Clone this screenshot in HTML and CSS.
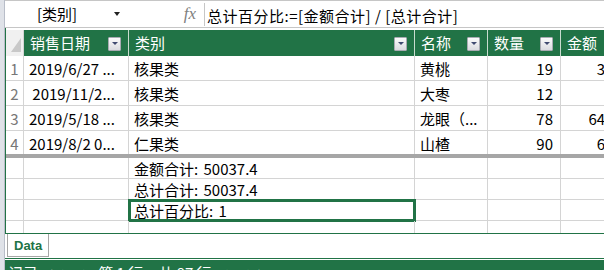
FILE: index.html
```html
<!DOCTYPE html>
<html lang="zh-CN">
<head>
<meta charset="UTF-8">
<title>Power Pivot - Data</title>
<link rel="stylesheet" href="styles.css">
</head>
<body>
  <div class="window">
    <div class="edge"></div>
    <div class="main">

      <div class="formula-bar">
        <div class="name-box">
          <span class="name">[类别]</span>
          <span class="name-arrow"></span>
        </div>
        <div class="fx">fx</div>
        <div class="formula">总计百分比:=[金额合计] / [总计合计]</div>
      </div>

      <div class="grid-panel">
        <div class="grid head">
          <div class="corner">
            <svg width="17" height="25" viewBox="0 0 17 25"><polygon points="15,8 15,22 5,22" fill="#c8c8c8"/></svg>
          </div>
          <div class="hcell"><span>销售日期</span><span class="filter"></span></div>
          <div class="hcell"><span>类别</span><span class="filter"></span></div>
          <div class="hcell"><span>名称</span><span class="filter"></span></div>
          <div class="hcell"><span>数量</span><span class="filter"></span></div>
          <div class="hcell"><span>金额</span></div>
        </div>

        <div class="rows">
          <div class="grid row">
            <div class="cell num-col">1</div>
            <div class="cell">2019/6/27 ...</div>
            <div class="cell">核果类</div>
            <div class="cell">黄桃</div>
            <div class="cell right">19</div>
            <div class="cell right">34.2</div>
          </div>
          <div class="grid row">
            <div class="cell num-col">2</div>
            <div class="cell">&nbsp;2019/11/2...</div>
            <div class="cell">核果类</div>
            <div class="cell">大枣</div>
            <div class="cell right">12</div>
            <div class="cell right">72</div>
          </div>
          <div class="grid row">
            <div class="cell num-col">3</div>
            <div class="cell">2019/5/18 ...</div>
            <div class="cell">核果类</div>
            <div class="cell">龙眼（...</div>
            <div class="cell right">78</div>
            <div class="cell right">646.8</div>
          </div>
          <div class="grid row">
            <div class="cell num-col">4</div>
            <div class="cell">2019/8/2 0...</div>
            <div class="cell">仁果类</div>
            <div class="cell">山楂</div>
            <div class="cell right">90</div>
            <div class="cell right">63.5</div>
          </div>
        </div>

        <div class="splitter"></div>

        <div class="measures">
          <div class="grid mrow">
            <div class="cell"></div>
            <div class="cell"></div>
            <div class="cell">金额合计: 50037.4</div>
            <div class="cell"></div>
            <div class="cell"></div>
            <div class="cell"></div>
          </div>
          <div class="grid mrow">
            <div class="cell"></div>
            <div class="cell"></div>
            <div class="cell">总计合计: 50037.4</div>
            <div class="cell"></div>
            <div class="cell"></div>
            <div class="cell"></div>
          </div>
          <div class="grid mrow">
            <div class="cell"></div>
            <div class="cell"></div>
            <div class="cell selected">总计百分比: 1</div>
            <div class="cell"></div>
            <div class="cell"></div>
            <div class="cell"></div>
          </div>
          <div class="grid mrow">
            <div class="cell"></div>
            <div class="cell"></div>
            <div class="cell"></div>
            <div class="cell"></div>
            <div class="cell"></div>
            <div class="cell"></div>
          </div>
        </div>
      </div>

      <div class="tabs">
        <div class="tab">Data</div>
      </div>

      <div class="status">
        <span>记录:</span>
        <span class="nav first">|◀</span>
        <span class="nav">◀</span>
        <span class="pos">第 1 行，共 87 行</span>
        <span class="nav">▶</span>
        <span class="nav">▶|</span>
      </div>

    </div>
  </div>
</body>
</html>
```

FILE: styles.css
```css
* {
    box-sizing: border-box;
}
body {
    margin: 0;
    width: 604px;
    height: 270px;
    overflow: hidden;
    background-color: #fff;
    font-family: "Noto Sans CJK SC", "Noto Sans", sans-serif;
    font-size: 15px;
    color: #000;
}
.window {
    display: flex;
    height: 270px;
}
.edge {
    width: 5px;
    flex: none;
    background-color: #dfe2e8;
    border-right: 1px solid #b8bdc8;
}
.main {
    flex: 1;
    min-width: 0;
    display: flex;
    flex-direction: column;
    overflow: hidden;
}

/* formula bar */
.formula-bar {
    height: 28px;
    flex: none;
    display: flex;
    border-top: 1px solid #c6c6c6;
    border-bottom: 1px solid #c6c6c6;
}
.name-box {
    width: 125px;
    flex: none;
    display: flex;
    align-items: center;
    justify-content: space-between;
    padding: 0 10px 1px 32px;
    line-height: 20px;
}
.name-arrow {
    width: 0;
    height: 0;
    border-left: 3px solid transparent;
    border-right: 3px solid transparent;
    border-top: 4px solid #222;
}
.fx {
    width: 75px;
    flex: none;
    margin: 2px 0 1px;
    padding-right: 8px;
    border-right: 1px solid #c6c6c6;
    text-align: right;
    font-family: "Liberation Serif", serif;
    font-style: italic;
    font-size: 17px;
    line-height: 22px;
    color: #808080;
}
.formula {
    flex: 1;
    white-space: nowrap;
    padding: 5px 0 0 2px;
    line-height: 20px;
    letter-spacing: 0.5px;
}

/* grid */
.grid-panel {
    flex: none;
    display: flex;
    flex-direction: column;
    padding-top: 2px;
    border-left: 1px solid #217346;
    border-bottom: 1px solid #217346;
}
.grid {
    display: grid;
    grid-template-columns: 18px 105px 286px 73px 73px 73px;
}
.head {
    height: 26px;
    background-color: #217346;
    color: #fff;
}
.corner {
    background-color: #f0f0f0;
    border-right: 1px solid #d4d4d4;
}
.corner svg {
    display: block;
}
.hcell {
    display: flex;
    align-items: center;
    justify-content: space-between;
    padding: 0 7px 1px 6px;
    border-right: 1px solid #c9dccf;
    white-space: nowrap;
}
.filter {
    width: 13px;
    height: 14px;
    flex: none;
    display: flex;
    align-items: center;
    justify-content: center;
    margin-top: 2px;
    border: 1px solid #a9abb3;
    border-radius: 1px;
    background: linear-gradient(#fbfbfb, #dadbe0);
}
.filter::after {
    content: "";
    border-left: 3px solid transparent;
    border-right: 3px solid transparent;
    border-top: 3px solid #3f4a70;
}
.rows {
    height: 98px;
    overflow: hidden;
}
.row {
    height: 25px;
    border-bottom: 1px solid #d4d4d4;
}
.cell {
    display: flex;
    align-items: center;
    padding: 0 4px 0 5px;
    border-right: 1px solid #d4d4d4;
    white-space: nowrap;
    overflow: hidden;
}
.num-col {
    justify-content: center;
    padding: 0;
    color: #777;
}
.right {
    justify-content: flex-end;
    padding-right: 7px;
}
.splitter {
    height: 4px;
    background-color: #a6a6a6;
}
.measures {
    height: 75px;
    overflow: hidden;
}
.mrow {
    height: 21px;
    border-bottom: 1px solid #d4d4d4;
}
.mrow .cell {
    word-spacing: 2px;
}
.selected {
    overflow: visible;
    outline: 3px solid #217346;
    outline-offset: -2px;
}

/* sheet tabs + status */
.tabs {
    height: 25px;
    flex: none;
    padding-left: 2px;
    border-bottom: 1px solid #217346;
}
.tab {
    width: 42px;
    height: 23px;
    padding: 4px 0 0 6px;
    border: 1px solid #a6a6a6;
    border-top: none;
    font-family: "Liberation Sans", Arial, sans-serif;
    font-weight: bold;
    font-size: 13px;
    color: #217346;
}
.status {
    flex: 1;
    display: flex;
    align-items: flex-start;
    padding: 2px 0 0 3px;
    border-top: 1px solid #fff;
    background-color: #217346;
    color: #fff;
    white-space: nowrap;
}
.nav {
    font-size: 11px;
    line-height: 24px;
}
.nav.first {
    margin-left: 8px;
}
.status .nav + .nav {
    margin-left: 10px;
}
.pos {
    margin: 0 14px 0 13px;
}
```
